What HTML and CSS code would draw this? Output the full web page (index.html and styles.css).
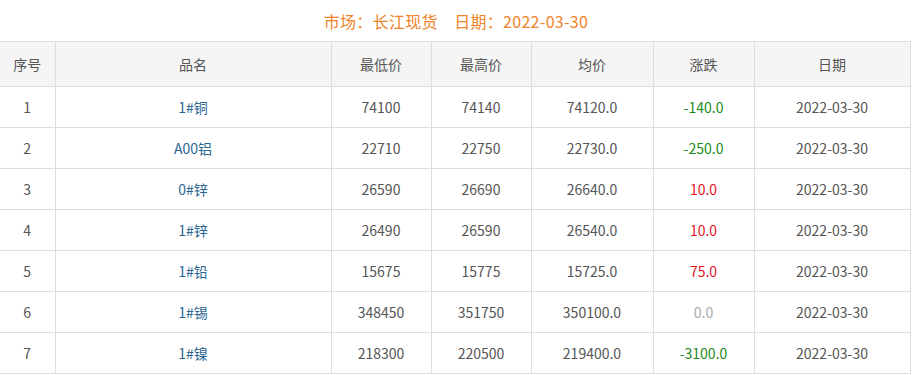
FILE: index.html
```html
<!DOCTYPE html>
<html lang="zh-CN">

<head>
    <meta charset="UTF-8" />
    <meta name="viewport" content="width=device-width, initial-scale=1" />
    <title>长江现货价格</title>
    <link rel="stylesheet" href="styles.css">
</head>

<body>
    <div class="titulo">市场：长江现货　日期：2022-03-30</div>
    <table class="tabela">
        <colgroup>
            <col class="c-num">
            <col class="c-nome">
            <col class="c-preco">
            <col class="c-preco">
            <col class="c-media">
            <col class="c-var">
            <col class="c-data">
        </colgroup>
        <thead>
            <tr>
                <th>序号</th>
                <th>品名</th>
                <th>最低价</th>
                <th>最高价</th>
                <th>均价</th>
                <th>涨跌</th>
                <th>日期</th>
            </tr>
        </thead>
        <tbody>
            <tr>
                <td>1</td>
                <td><a href="#">1#铜</a></td>
                <td>74100</td>
                <td>74140</td>
                <td>74120.0</td>
                <td class="baixa">-140.0</td>
                <td>2022-03-30</td>
            </tr>
            <tr>
                <td>2</td>
                <td><a href="#">A00铝</a></td>
                <td>22710</td>
                <td>22750</td>
                <td>22730.0</td>
                <td class="baixa">-250.0</td>
                <td>2022-03-30</td>
            </tr>
            <tr>
                <td>3</td>
                <td><a href="#">0#锌</a></td>
                <td>26590</td>
                <td>26690</td>
                <td>26640.0</td>
                <td class="alta">10.0</td>
                <td>2022-03-30</td>
            </tr>
            <tr>
                <td>4</td>
                <td><a href="#">1#锌</a></td>
                <td>26490</td>
                <td>26590</td>
                <td>26540.0</td>
                <td class="alta">10.0</td>
                <td>2022-03-30</td>
            </tr>
            <tr>
                <td>5</td>
                <td><a href="#">1#铅</a></td>
                <td>15675</td>
                <td>15775</td>
                <td>15725.0</td>
                <td class="alta">75.0</td>
                <td>2022-03-30</td>
            </tr>
            <tr>
                <td>6</td>
                <td><a href="#">1#锡</a></td>
                <td>348450</td>
                <td>351750</td>
                <td>350100.0</td>
                <td class="zero">0.0</td>
                <td>2022-03-30</td>
            </tr>
            <tr>
                <td>7</td>
                <td><a href="#">1#镍</a></td>
                <td>218300</td>
                <td>220500</td>
                <td>219400.0</td>
                <td class="baixa">-3100.0</td>
                <td>2022-03-30</td>
            </tr>
        </tbody>
    </table>
</body>

</html>
```

FILE: styles.css
```css
body {
    margin: 0;
    font-family: "Noto Sans CJK SC", "Noto Sans", sans-serif;
    font-size: 14px;
    color: #555;
    background: #fff;
}

.titulo {
    height: 41px;
    line-height: 42px;
    text-align: center;
    font-size: 16px;
    letter-spacing: 0.3px;
    color: #f0842a;
}

.tabela {
    width: 910px;
    border-collapse: collapse;
    table-layout: fixed;
}

.tabela th,
.tabela td {
    height: 40px;
    padding: 0;
    text-align: center;
    font-weight: normal;
    border: 1px solid #ddd;
}

.tabela th {
    height: 44px;
    background-color: #f5f5f5;
    color: #555;
}

.tabela tr > :first-child {
    border-left: none;
}

.c-num { width: 55px; }
.c-nome { width: 276px; }
.c-preco { width: 100px; }
.c-media { width: 122px; }
.c-var { width: 101px; }
.c-data { width: 156px; }

.tabela a {
    color: #2b6592;
    text-decoration: none;
}

.baixa { color: #1b8a1b; }
.alta { color: #e6141e; }
.zero { color: #aaa; }
```
